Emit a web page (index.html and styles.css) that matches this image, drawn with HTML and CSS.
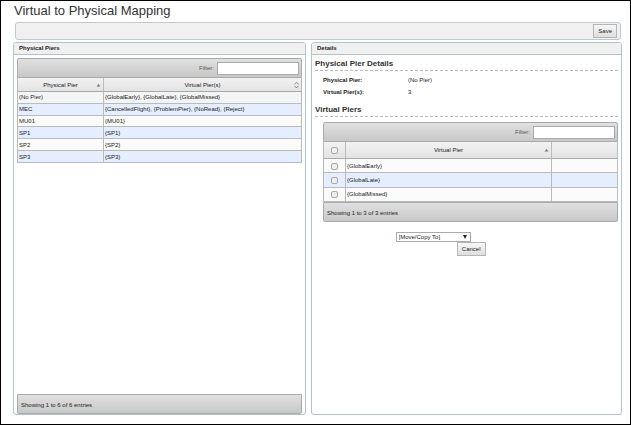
FILE: index.html
```html
<!DOCTYPE html>
<html lang="en">
<head>
<meta charset="utf-8">
<title>Virtual to Physical Mapping</title>
<link rel="stylesheet" href="styles.css">
</head>
<body>
<main class="page">
  <h1 class="title">Virtual to Physical Mapping</h1>
  <div class="toolbar"><button class="button" type="button">Save</button></div>
  <div class="panels">
    <section class="panel">
      <h2 class="panel-title">Physical Piers</h2>
      <div class="panel-body piers">
        <div class="bar filter"><label for="f1">Filter:</label><input class="field" id="f1" type="text"></div>
        <table class="grid physical">
          <thead><tr>
            <th class="name">Physical Pier<svg class="sort" viewBox="0 0 5 8"><path d="M.5 5.5 2.5 3 4.5 5.5z" fill="#777"/></svg></th>
            <th>Virtual Pier(s)<svg class="sort" viewBox="0 0 5 8"><path d="M.5 3.4 2.5 1.2 4.5 3.4M.5 4.8 2.5 7 4.5 4.8" fill="none" stroke="#777" stroke-width=".8"/></svg></th>
          </tr></thead>
          <tbody>
            <tr class="selected"><td>(No Pier)</td><td>{GlobalEarly}, {GlobalLate}, {GlobalMissed}</td></tr>
            <tr><td>MEC</td><td>{CancelledFlight}, {ProblemPier}, {NoRead}, {Reject}</td></tr>
            <tr><td>MU01</td><td>{MU01}</td></tr>
            <tr><td>SP1</td><td>{SP1}</td></tr>
            <tr><td>SP2</td><td>{SP2}</td></tr>
            <tr><td>SP3</td><td>{SP3}</td></tr>
          </tbody>
        </table>
        <div class="bar status push">Showing 1 to 6 of 6 entries</div>
      </div>
    </section>
    <section class="panel">
      <h2 class="panel-title">Details</h2>
      <div class="panel-body details">
        <h3 class="heading">Physical Pier Details</h3>
        <dl class="facts">
          <dt>Physical Pier:</dt><dd>(No Pier)</dd>
          <dt>Virtual Pier(s):</dt><dd>3</dd>
        </dl>
        <h3 class="heading">Virtual Piers</h3>
        <div class="members">
          <div class="bar filter"><label for="f2">Filter:</label><input class="field" id="f2" type="text"></div>
          <table class="grid virtual">
            <thead><tr>
              <th class="pick"><input class="check" type="checkbox" aria-label="Select all"></th>
              <th>Virtual Pier<svg class="sort" viewBox="0 0 5 8"><path d="M.5 5.5 2.5 3 4.5 5.5z" fill="#777"/></svg></th>
              <th class="extra"></th>
            </tr></thead>
            <tbody>
              <tr><td class="pick"><input class="check" type="checkbox" aria-label="GlobalEarly"></td><td>{GlobalEarly}</td><td></td></tr>
              <tr><td class="pick"><input class="check" type="checkbox" aria-label="GlobalLate"></td><td>{GlobalLate}</td><td></td></tr>
              <tr><td class="pick"><input class="check" type="checkbox" aria-label="GlobalMissed"></td><td>{GlobalMissed}</td><td></td></tr>
            </tbody>
          </table>
          <div class="bar status">Showing 1 to 3 of 3 entries</div>
        </div>
        <div class="actions">
          <div class="select-box">
            <select class="select" aria-label="Move or copy to"><option>[Move/Copy To]</option></select>
            <svg class="arrow" viewBox="0 0 4 4"><path d="M0 0h4L2 4z" fill="#222"/></svg>
          </div>
          <button class="button" type="button">Cancel</button>
        </div>
      </div>
    </section>
  </div>
</main>
</body>
</html>
```
FILE: styles.css
```css
* { box-sizing: border-box; }

body {
  margin: 0;
  font: 6px/8px "Liberation Sans", Arial, sans-serif;
  color: #222;
  background: #fff;
}

h1, h2, h3, dl, dd { margin: 0; }

button, input, select { font: inherit; color: inherit; margin: 0; }

.page {
  display: flex;
  flex-direction: column;
  min-height: 100vh;
  padding: 1px 8px 9px 12px;
  border: 1px solid #000;
}

.title {
  padding-left: 1px;
  font-size: 13px;
  line-height: 18px;
  font-weight: 400;
  color: #333;
}

.toolbar {
  display: flex;
  justify-content: flex-end;
  height: 18px;
  margin: 2px 1px 2px 2px;
  padding: 1px 3px;
  border: 1px solid #bccad3;
  border-radius: 3px;
  background: #f0f0f0;
}

.button {
  height: 14px;
  padding: 0 4px;
  border: 1px solid #b5b5b5;
  background: linear-gradient(#f8f8f8, #dedede);
}

.panels {
  flex: 1;
  display: grid;
  grid-template-columns: 293fr 311fr;
  gap: 5px;
}

.panel {
  display: flex;
  flex-direction: column;
  border: 1px solid #b3c3ce;
  border-radius: 3px;
}

.panel-title {
  height: 12px;
  padding: 0 5px;
  font-size: 6px;
  line-height: 11px;
  border-bottom: 1px solid #b3c3ce;
  border-radius: 2px 2px 0 0;
  background: #f0f0f0;
}

.panel-body { flex: 1; display: flex; flex-direction: column; }

.piers { padding: 3px 3px 0; }

.details { padding: 4px 3px; }

.bar {
  display: flex;
  align-items: center;
  height: 20px;
  border: 1px solid #aaa;
  background: linear-gradient(#e0e0e0, #c8c8c8);
}

.filter {
  justify-content: flex-end;
  gap: 3px;
  padding: 0 2px;
  color: #555;
  border-radius: 2px 2px 0 0;
}

.status { padding: 2px 3px 0; border-radius: 0 0 2px 2px; }

.push { margin-top: auto; }

.field {
  width: 82px;
  height: 13px;
  padding: 1px 2px;
  border: 1px solid #aaa;
  background: #fff;
}

.grid {
  width: 100%;
  table-layout: fixed;
  border-collapse: separate;
  border-spacing: 0;
  border-left: 1px solid #b8b8b8;
}

.grid th, .grid td {
  padding: 0 1px;
  border-right: 1px solid #bbb;
  border-bottom: 1px solid #bbb;
}

.grid th {
  position: relative;
  font-weight: 400;
  text-align: center;
  border-bottom-color: #aaa;
  background: linear-gradient(#f2f2f2, #e3e3e3);
}

.grid td { background: #fbfbfb; }

.grid tbody tr:nth-child(even) td { background: #e4eeff; }

.grid .selected td { background: #f2f5f5; }

.grid .pick { width: 22px; text-align: center; }

.physical { height: 85px; }

.physical thead { height: 14px; }

.physical .name { width: 86px; }

.virtual { height: 60px; }

.virtual thead { height: 17px; }

.virtual .extra { width: 66px; }

.sort { position: absolute; right: 2px; top: 50%; width: 5px; height: 8px; margin-top: -4px; }

.check {
  appearance: none;
  display: inline-block;
  vertical-align: middle;
  width: 7px;
  height: 7px;
  border: 1px solid #aaa;
  border-radius: 2px;
  background: #eee;
}

.heading {
  height: 12px;
  font-size: 8px;
  line-height: 10px;
  color: #333;
  border-bottom: 1px dashed #bbb;
}

.facts {
  display: grid;
  grid-template-columns: 85px 1fr;
  gap: 4px 0;
  padding: 5px 8px 9px;
}

.facts dt { font-weight: 700; }

.members { padding: 5px 0 0 8px; }

.actions { align-self: center; width: 90px; margin: 10px 0 0 -52px; }

.select-box { position: relative; width: 75px; height: 10px; }

.select {
  appearance: none;
  display: block;
  width: 100%;
  height: 100%;
  padding: 0 2px;
  border: 1px solid #aaa;
  border-radius: 0;
  background: #fff;
}

.actions .button { display: block; margin-left: auto; }

.arrow { position: absolute; right: 4px; top: 3px; width: 4px; height: 4px; }
```
